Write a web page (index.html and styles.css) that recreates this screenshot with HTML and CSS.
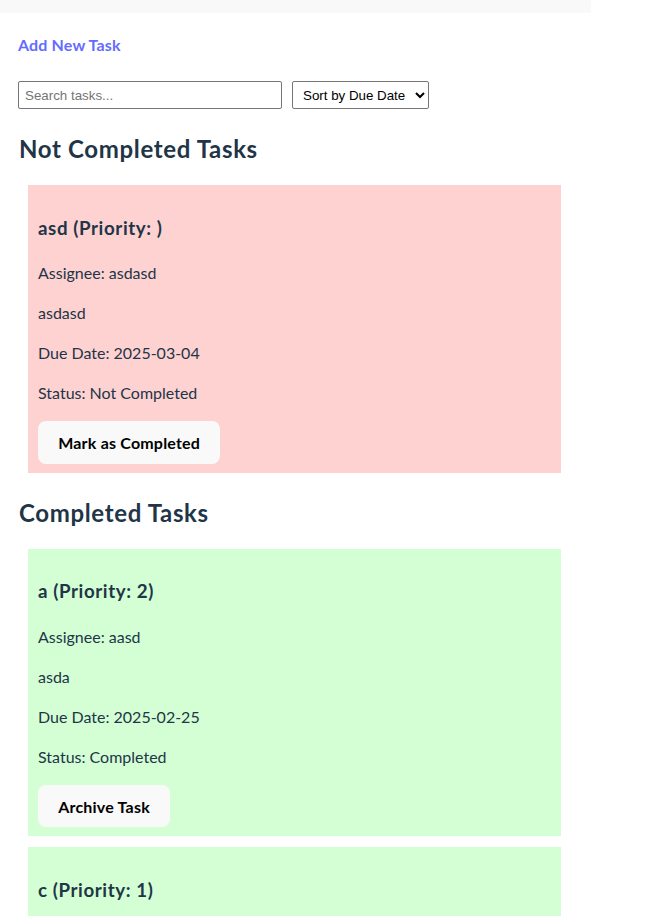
FILE: index.html
```html
<!DOCTYPE html>
<html lang="en">
<head>
<meta charset="utf-8">
<title>Tasks</title>
<link rel="stylesheet" href="styles.css">
</head>
<body>
<div class="topbar"></div>
<main class="app">
  <a class="add-link" href="#">Add New Task</a>
  <div class="controls">
    <input class="search" type="text" placeholder="Search tasks...">
    <select class="sort">
      <option>Sort by Due Date</option>
      <option>Sort by Priority</option>
    </select>
  </div>

  <h2 class="section-title">Not Completed Tasks</h2>
  <div class="task task-open">
    <h3 class="task-title">asd (Priority: )</h3>
    <p>Assignee: asdasd</p>
    <p>asdasd</p>
    <p>Due Date: 2025-03-04</p>
    <p>Status: Not Completed</p>
    <button class="btn">Mark as Completed</button>
  </div>

  <h2 class="section-title">Completed Tasks</h2>
  <div class="task task-done">
    <h3 class="task-title">a (Priority: 2)</h3>
    <p>Assignee: aasd</p>
    <p>asda</p>
    <p>Due Date: 2025-02-25</p>
    <p>Status: Completed</p>
    <button class="btn">Archive Task</button>
  </div>
  <div class="task task-done">
    <h3 class="task-title">c (Priority: 1)</h3>
    <p>Assignee: c</p>
    <p>c</p>
    <p>Due Date: 2025-02-28</p>
    <p>Status: Completed</p>
    <button class="btn">Archive Task</button>
  </div>
</main>
</body>
</html>
```
FILE: styles.css
```css
html, body {
  margin: 0;
  padding: 0;
  background: #ffffff;
}
body {
  font-family: Lato, "Noto Sans", sans-serif;
  font-size: 16px;
  line-height: 1.5;
  color: #213547;
}
.topbar {
  width: 591px;
  height: 13px;
  background: #f9f9f9;
}
.app {
  width: 553px;
  padding: 20px 0 0 18px;
}
.add-link {
  display: block;
  width: max-content;
  color: #646cff;
  font-weight: 700;
  text-decoration: none;
  line-height: 24px;
  letter-spacing: 0.15px;
}
.controls {
  display: flex;
  align-items: center;
  gap: 10px;
  margin-top: 24px;
  height: 28px;
}
.search {
  box-sizing: border-box;
  width: 264px;
  height: 28px;
  margin: 0;
  padding: 0 6px;
  border: 1px solid #767676;
  border-radius: 2px;
  font-family: "Liberation Sans", Arial, sans-serif;
  font-size: 13.33px;
  color: #000;
  background: #fff;
}
.search::placeholder {
  color: #757575;
}
.sort {
  box-sizing: border-box;
  width: 137px;
  height: 28px;
  margin: 0;
  padding: 0 2px 0 6px;
  border: 1px solid #767676;
  border-radius: 2px;
  font-family: "Liberation Sans", Arial, sans-serif;
  font-size: 13.33px;
  color: #000;
  background: #fff;
}
.section-title {
  font-size: 24px;
  line-height: 36px;
  font-weight: 700;
  letter-spacing: 0.65px;
  margin: 22px 0 18px;
  padding-left: 1px;
}
.task {
  margin: 10px;
  padding: 10px;
}
.task + .task {
  margin-top: 11px;
}
.task-open {
  background: #ffd2d2;
}
.task-done {
  background: #d4ffd4;
}
.task-title {
  font-size: 18.72px;
  line-height: 28px;
  font-weight: 700;
  letter-spacing: 0.6px;
  margin: 18.72px 0 19.72px;
}
.task p {
  margin: 16px 0;
  line-height: 24px;
}
.btn {
  display: block;
  margin-bottom: -1px;
  border-radius: 8px;
  border: 1px solid transparent;
  padding: 9.6px 19.2px;
  font-family: Lato, "Noto Sans", sans-serif;
  font-size: 16px;
  font-weight: 700;
  line-height: 21px;
  letter-spacing: 0.2px;
  background: #f9f9f9;
  color: #000;
  cursor: pointer;
}
```
